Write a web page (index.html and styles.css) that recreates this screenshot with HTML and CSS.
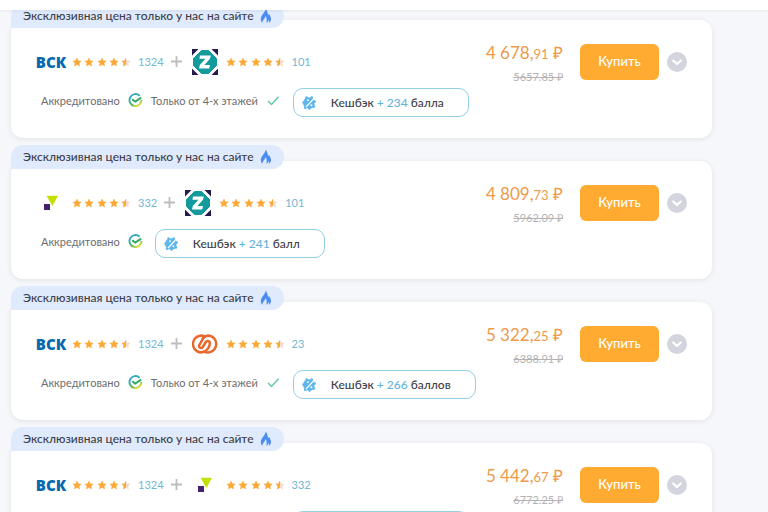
FILE: index.html
```html
<!DOCTYPE html>
<html lang="ru">
  <head>
    <meta charset="UTF-8" />
    <meta name="viewport" content="width=device-width, initial-scale=1.0" />
    <title>Предложения страховых компаний</title>
    <link rel="stylesheet" href="styles.css">
  </head>
  <body>
    <!-- Общие иконки -->
    <svg class="sprite" aria-hidden="true">
      <defs>
        <linearGradient id="sberGradient" x1="0" y1="0" x2="0.7" y2="1">
          <stop offset="0" stop-color="#2f9fe0" />
          <stop offset="0.45" stop-color="#35b3a0" />
          <stop offset="0.75" stop-color="#6cc04a" />
          <stop offset="1" stop-color="#e3df3c" />
        </linearGradient>
        <clipPath id="halfStar"><rect width="5" height="10" /></clipPath>
      </defs>
      <symbol id="star" viewBox="0 0 10 10">
        <path d="M5 1 6.300 3.700 9.200 4.100 7.100 6.100 7.600 9 5 7.600 2.400 9 2.900 6.100.8 4.100 3.700 3.700Z" stroke-width=".4" stroke-linejoin="round" />
      </symbol>
      <symbol id="rating" viewBox="0 0 60 10">
        <g fill="#fca836" stroke="#fca836">
          <use href="#star" x="0" width="10" height="10" />
          <use href="#star" x="12" width="10" height="10" />
          <use href="#star" x="25" width="10" height="10" />
          <use href="#star" x="37" width="10" height="10" />
        </g>
        <g transform="translate(49 0)">
          <use href="#star" width="10" height="10" fill="#f3dccb" stroke="#f3dccb" />
          <g clip-path="url(#halfStar)"><use href="#star" width="10" height="10" fill="#fca836" stroke="#fca836" /></g>
        </g>
      </symbol>
      <symbol id="flame" viewBox="0 0 12 16">
        <path d="M5.600.8C5.800 4 1 6.800.8 11c0 1.500.5 2.800 1.400 3.800C2.400 12 4.700 10.800 5.800 7.900c1 1.900 1 4.300.6 6.900 1.300-.7 2-2 2.100-3.400.5 1.100.6 2.200.4 3.400 1.400-.8 2.200-2.200 2.200-3.700 0-2.400-1.300-3.300-1.900-5.200-.6.400-.9.800-1 1.300C7.500 5 7.400 2.200 5.600.8Z" fill="#4a8df0" />
      </symbol>
      <symbol id="accredited" viewBox="0 0 15 15">
        <path d="M11.600 2.700A6 6 0 1 0 13.500 7" fill="none" stroke="url(#sberGradient)" stroke-width="1.900" />
        <path d="M4.200 6.400 7.200 8.500 13.200 4.600" fill="none" stroke="#31a866" stroke-width="1.900" />
      </symbol>
      <symbol id="check" viewBox="0 0 15 15">
        <path d="M2 8 5.500 11.500 12.500 3.800" fill="none" stroke="#62c99c" stroke-width="1.400" />
      </symbol>
      <symbol id="cashback" viewBox="0 0 14 14">
        <circle cx="7" cy="7" r="6" fill="#5fb6ec" />
        <g fill="#5fb6ec">
          <circle cx="4.500" cy="1.500" r="1.200" />
          <circle cx="9.800" cy="1.500" r="1.200" />
          <circle cx="12.700" cy="5.500" r="1.200" />
          <circle cx="12" cy="10.500" r="1.200" />
          <circle cx="7.500" cy="12.800" r="1.100" />
          <circle cx="3" cy="11.800" r="1.200" />
          <circle cx="1.200" cy="6.500" r="1.100" />
        </g>
        <path d="M4 11 11.500 3" stroke="#fff" stroke-width="1.100" />
        <circle cx="6" cy="4.200" r=".9" fill="#fff" />
        <circle cx="9.400" cy="9.200" r="1" fill="#fff" />
        <path d="M6.800 0 7.200 1.800M14 7.800 12 7.600M5 14 5.600 12.200" stroke="#fff" stroke-width=".8" />
      </symbol>
      <symbol id="plus" viewBox="0 0 11 11">
        <path d="M5.500 0V11M0 5.500H11" stroke="#bdbdc0" stroke-width="1.800" />
      </symbol>
      <symbol id="zetta" viewBox="0 0 26 26">
        <rect width="26" height="26" fill="#251a4d" />
        <path d="M7.500-1h11L27 7.500v11L18.500 27h-11L-1 18.500v-11Z" fill="#fff" />
        <path d="M9.500 1.500h7L24.500 9.500v7L16.500 24.500h-7L1.500 16.500v-7Z" fill="#129a9c" stroke="#129a9c" stroke-width="1" stroke-linejoin="round" />
        <path d="M8 6.500h10.800L18 9.800 12.400 16h5.600L17.200 19.500H7L7.800 16 13.400 9.800H7.400Z" fill="#fff" />
      </symbol>
      <symbol id="absolut" viewBox="0 0 14 16">
        <path d="M2.500.8H14L8.400 11Z" fill="#c4e000" />
        <rect y="9" width="6" height="6" fill="#43216e" />
      </symbol>
      <symbol id="soglasie" viewBox="0 0 26 20">
        <g fill="none" stroke="#e9692c" stroke-width="2.500" stroke-linecap="round">
          <path d="M13 2.600A8.300 8.300 0 1 0 13 17.400C15.500 15.500 17.800 12 17.800 9.500 17.800 6.500 14.800 6.300 13.500 8.500L10.800 13C9.600 15 6.300 13.800 7.300 11L11 4.600" />
          <path d="M11 4.600C12.500 2.500 14.500 1.500 16.500 1.500A8.500 8.500 0 1 1 12 17.600" />
        </g>
      </symbol>
      <symbol id="chevron" viewBox="0 0 20 20">
        <path d="M6.200 8.500 10 12 13.800 8.500" fill="none" stroke="#fff" stroke-width="2.200" stroke-linecap="round" stroke-linejoin="round" />
      </symbol>
    </svg>

    <header class="topbar"></header>

    <main class="offers">
      <article class="offer">
        <div class="offer-tag">
          <span>Эксклюзивная цена только у нас на сайте</span>
          <svg class="flame"><use href="#flame" /></svg>
        </div>
        <div class="card">
          <div class="info">
            <div class="companies">
              <span class="logo logo-vsk">ВСК</span>
              <svg class="rating"><use href="#rating" /></svg>
              <span class="reviews">1324</span>
              <svg class="plus"><use href="#plus" /></svg>
              <span class="logo"><svg width="26" height="26"><use href="#zetta" /></svg></span>
              <svg class="rating"><use href="#rating" /></svg>
              <span class="reviews">101</span>
            </div>
            <div class="conditions">
              <span class="condition">Аккредитовано <svg width="15" height="15"><use href="#accredited" /></svg></span>
              <span class="condition">Только от 4-х этажей <svg width="15" height="15"><use href="#check" /></svg></span>
              <div class="cashback">
                <svg width="14" height="14"><use href="#cashback" /></svg>
                <span>Кешбэк <b>+ 234</b> балла</span>
              </div>
            </div>
          </div>
          <div class="prices">
            <div class="price">4 678,<small>91</small> ₽</div>
            <del class="old-price">5657.85 ₽</del>
          </div>
          <button class="buy-btn" type="button">Купить</button>
          <button class="more-btn" type="button" aria-label="Подробнее"><svg width="20" height="20"><use href="#chevron" /></svg></button>
        </div>
      </article>

      <article class="offer">
        <div class="offer-tag">
          <span>Эксклюзивная цена только у нас на сайте</span>
          <svg class="flame"><use href="#flame" /></svg>
        </div>
        <div class="card">
          <div class="info">
            <div class="companies">
              <span class="logo"><svg width="14" height="16"><use href="#absolut" /></svg></span>
              <svg class="rating"><use href="#rating" /></svg>
              <span class="reviews">332</span>
              <svg class="plus"><use href="#plus" /></svg>
              <span class="logo"><svg width="26" height="26"><use href="#zetta" /></svg></span>
              <svg class="rating"><use href="#rating" /></svg>
              <span class="reviews">101</span>
            </div>
            <div class="conditions">
              <span class="condition">Аккредитовано <svg width="15" height="15"><use href="#accredited" /></svg></span>
              <div class="cashback">
                <svg width="14" height="14"><use href="#cashback" /></svg>
                <span>Кешбэк <b>+ 241</b> балл</span>
              </div>
            </div>
          </div>
          <div class="prices">
            <div class="price">4 809,<small>73</small> ₽</div>
            <del class="old-price">5962.09 ₽</del>
          </div>
          <button class="buy-btn" type="button">Купить</button>
          <button class="more-btn" type="button" aria-label="Подробнее"><svg width="20" height="20"><use href="#chevron" /></svg></button>
        </div>
      </article>

      <article class="offer">
        <div class="offer-tag">
          <span>Эксклюзивная цена только у нас на сайте</span>
          <svg class="flame"><use href="#flame" /></svg>
        </div>
        <div class="card">
          <div class="info">
            <div class="companies">
              <span class="logo logo-vsk">ВСК</span>
              <svg class="rating"><use href="#rating" /></svg>
              <span class="reviews">1324</span>
              <svg class="plus"><use href="#plus" /></svg>
              <span class="logo"><svg width="26" height="20"><use href="#soglasie" /></svg></span>
              <svg class="rating"><use href="#rating" /></svg>
              <span class="reviews">23</span>
            </div>
            <div class="conditions">
              <span class="condition">Аккредитовано <svg width="15" height="15"><use href="#accredited" /></svg></span>
              <span class="condition">Только от 4-х этажей <svg width="15" height="15"><use href="#check" /></svg></span>
              <div class="cashback">
                <svg width="14" height="14"><use href="#cashback" /></svg>
                <span>Кешбэк <b>+ 266</b> баллов</span>
              </div>
            </div>
          </div>
          <div class="prices">
            <div class="price">5 322,<small>25</small> ₽</div>
            <del class="old-price">6388.91 ₽</del>
          </div>
          <button class="buy-btn" type="button">Купить</button>
          <button class="more-btn" type="button" aria-label="Подробнее"><svg width="20" height="20"><use href="#chevron" /></svg></button>
        </div>
      </article>

      <article class="offer">
        <div class="offer-tag">
          <span>Эксклюзивная цена только у нас на сайте</span>
          <svg class="flame"><use href="#flame" /></svg>
        </div>
        <div class="card">
          <div class="info">
            <div class="companies">
              <span class="logo logo-vsk">ВСК</span>
              <svg class="rating"><use href="#rating" /></svg>
              <span class="reviews">1324</span>
              <svg class="plus"><use href="#plus" /></svg>
              <span class="logo"><svg width="14" height="16"><use href="#absolut" /></svg></span>
              <svg class="rating"><use href="#rating" /></svg>
              <span class="reviews">332</span>
            </div>
            <div class="conditions">
              <span class="condition">Аккредитовано <svg width="15" height="15"><use href="#accredited" /></svg></span>
              <span class="condition">Только от 4-х этажей <svg width="15" height="15"><use href="#check" /></svg></span>
              <div class="cashback">
                <svg width="14" height="14"><use href="#cashback" /></svg>
                <span>Кешбэк <b>+ 272</b> балла</span>
              </div>
            </div>
          </div>
          <div class="prices">
            <div class="price">5 442,<small>67</small> ₽</div>
            <del class="old-price">6772.25 ₽</del>
          </div>
          <button class="buy-btn" type="button">Купить</button>
          <button class="more-btn" type="button" aria-label="Подробнее"><svg width="20" height="20"><use href="#chevron" /></svg></button>
        </div>
      </article>
    </main>
  </body>
</html>
```

FILE: styles.css
```css
* {
  margin: 0;
  padding: 0;
  box-sizing: border-box;
}

body {
  height: 100vh;
  overflow: hidden;
  background: #f6f7fa;
  font-family: Lato, 'Open Sans', sans-serif;
  color: #3d4048;
}

svg {
  display: block;
  flex-shrink: 0;
}

.sprite {
  position: absolute;
  width: 0;
  height: 0;
}

/* Нижний край закреплённой шапки */
.topbar {
  position: sticky;
  top: 0;
  z-index: 2;
  height: 10px;
  background: #fff;
  box-shadow: 0 1px 3px rgba(60, 70, 90, 0.08);
}

.offers {
  display: flex;
  flex-direction: column;
  gap: 7px;
  margin: -6px 56px 0 11px;
}

.offer {
  display: flex;
  flex-direction: column;
  align-items: flex-start;
}

.offer-tag {
  z-index: 1;
  display: flex;
  align-items: center;
  gap: 6px;
  height: 24px;
  padding: 0 12px;
  border-radius: 12px 12px 12px 0;
  background: #dfeafd;
  font-size: 12px;
  font-weight: 500;
  line-height: 14px;
}

.flame {
  width: 12px;
  height: 16px;
}

.card {
  display: flex;
  align-items: flex-start;
  align-self: stretch;
  margin-top: -8px;
  padding: 24px 25px 21px 24px;
  border-radius: 12px;
  background: #fff;
  box-shadow: 0 1px 5px rgba(60, 70, 90, 0.12);
}

.info {
  flex: 1;
  display: flex;
  flex-direction: column;
  gap: 9px;
}

.companies {
  display: flex;
  align-items: center;
  height: 35px;
}

.logo {
  display: flex;
  justify-content: center;
  width: 32px;
  margin-right: 5px;
}

.logo-vsk {
  color: #0868ad;
  font-family: 'Open Sans', sans-serif;
  font-size: 15px;
  font-weight: 800;
}

.rating {
  width: 60px;
  height: 10px;
  margin-right: 6px;
}

.reviews {
  color: #6fb8d2;
  font-size: 11px;
}

.plus {
  width: 11px;
  height: 11px;
  margin: 0 7px;
}

.conditions {
  display: flex;
  align-items: flex-start;
  gap: 8px;
  padding-left: 6px;
}

.condition {
  display: flex;
  align-items: center;
  gap: 8px;
  height: 24px;
  color: #6d6d6f;
  font-size: 11px;
}

.cashback {
  display: flex;
  align-items: center;
  gap: 15px;
  height: 29px;
  margin-left: 4px;
  padding: 0 24px 0 8px;
  border: 1px solid #92cfe4;
  border-radius: 10px;
  font-size: 12px;
  font-weight: 500;
}

.cashback b {
  color: #5fb4dc;
  font-weight: 500;
}

.prices {
  display: flex;
  flex-direction: column;
  align-items: flex-end;
  gap: 7px;
  margin-right: 17px;
}

.price {
  color: #ee9a4a;
  font-size: 17px;
  line-height: 18px;
}

.price small {
  font-size: 13px;
}

.old-price {
  color: #b3b3b5;
  font-size: 11px;
  line-height: 14px;
}

.buy-btn {
  width: 79px;
  height: 36px;
  margin-right: 8px;
  padding-bottom: 2px;
  border: none;
  border-radius: 6px;
  background: #ffab32;
  color: #fff;
  font-family: inherit;
  font-size: 13px;
  font-weight: 500;
  cursor: pointer;
}

.more-btn {
  width: 20px;
  height: 20px;
  margin-top: 8px;
  border: none;
  border-radius: 50%;
  background: #d3d4de;
  cursor: pointer;
}

.buy-btn:hover {
  background: #f79f20;
}
```
